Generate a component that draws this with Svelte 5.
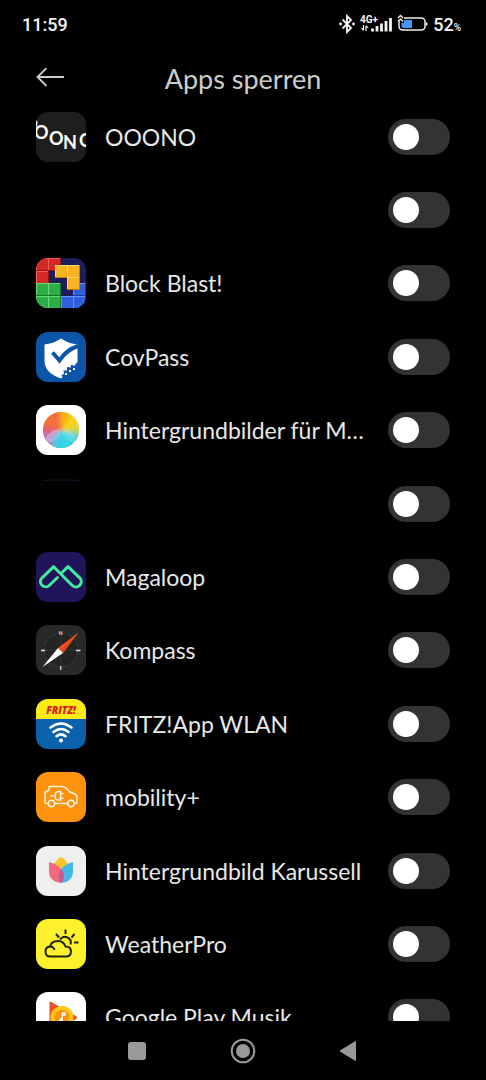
<script>
	let apps = $state([
		{ id: 'ooono', name: 'OOONO', locked: false },
		{ id: 'empty', name: '', locked: false },
		{ id: 'blocks', name: 'Block Blast!', locked: false },
		{ id: 'covpass', name: 'CovPass', locked: false },
		{ id: 'wheel', name: 'Hintergrundbilder für M…', locked: false },
		{ id: 'dark', name: '', locked: false },
		{ id: 'magaloop', name: 'Magaloop', locked: false },
		{ id: 'compass', name: 'Kompass', locked: false },
		{ id: 'fritz', name: 'FRITZ!App WLAN', locked: false },
		{ id: 'mobility', name: 'mobility+', locked: false },
		{ id: 'tulip', name: 'Hintergrundbild Karussell', locked: false },
		{ id: 'weather', name: 'WeatherPro', locked: false },
		{ id: 'music', name: 'Google Play Musik', locked: false }
	]);

	// base, highlight, shade
	const red = ['#d32a25', '#f0605a', '#98130f'];
	const green = ['#2fae45', '#6bd87a', '#14752a'];
	const blue = ['#2f5fdc', '#6c94f5', '#173a9c'];
	const yellow = ['#f9b320', '#ffd868', '#c67d08'];
	const blocks = [
		[0, 0, red],
		[12, 0, red],
		[0, 13, red],
		[0, 25, green],
		[12, 25, green],
		[0, 38, green],
		[12, 38, green],
		[37, 25, blue],
		[25, 38, blue],
		[37, 38, blue],
		[19, 7, yellow],
		[31, 7, yellow],
		[31, 19, yellow]
	];
</script>

{#snippet appIcon(id)}
	<svg class="icon" viewBox="0 0 50 50" aria-hidden="true">
		{#if id === 'ooono'}
			<rect width="50" height="50" fill="#1d1f1f" />
			<circle cx="-5.500" cy="11" r="6" fill="none" stroke="#fff" stroke-width="2" />
			<g class="ooono">
				<text x="-2" y="27">O</text>
				<text x="13" y="33">O</text>
				<text x="27" y="37">N</text>
				<text x="43" y="35">O</text>
			</g>
		{:else if id === 'blocks'}
			<rect width="50" height="50" fill="#1c1d5c" />
			{#each blocks as [x, y, [base, light, shade]]}
				<rect {x} {y} width="13" height="13" fill={shade} />
				<rect {x} {y} width="12" height="12" fill={light} />
				<rect x={x + 1} y={y + 1} width="11" height="11" fill={base} />
			{/each}
		{:else if id === 'covpass'}
			<rect width="50" height="50" fill="#0d55a9" />
			<path
				d="M25 6.500C20 10 14 12 8.500 12.500V29C8.500 38 16 43.500 25 46.500L26.500 45.500L25.500 43L28 42L27.500 38.500L31 38.500L31 35L34.500 35.500L35.500 32.500L38 34L41.500 30V12.500C36 12 30 10 25 6.500Z"
				fill="#fff"
			/>
			<path d="M16.500 20.500L23.500 28.500Q30 18 42 14" fill="none" stroke="#0d55a9" stroke-width="4" />
			<g fill="#fff">
				<rect x="29" y="41" width="2" height="2" />
				<rect x="33" y="38" width="2" height="2" />
				<rect x="37" y="36" width="2" height="2" />
			</g>
		{:else if id === 'wheel'}
			<defs>
				<clipPath id="disc"><circle cx="25" cy="25" r="18" /></clipPath>
				<filter id="soften"><feGaussianBlur stdDeviation="2" /></filter>
			</defs>
			<rect width="50" height="50" fill="#fff" />
			<g clip-path="url(#disc)">
				<rect width="50" height="50" fill="#fbb03a" />
				<g filter="url(#soften)">
					<path d="M25 26L20 0L45 0Z" fill="#f9b010" />
					<path d="M25 26L40 0L54 12L54 24Z" fill="#fad313" />
					<path d="M25 26L54 18L54 36Z" fill="#c6d85a" />
					<path d="M25 26L54 31L40 52L25 52Z" fill="#33d0dc" />
					<path d="M25 26L28 52L8 50L8 40Z" fill="#38c4e4" />
					<path d="M25 26L14 46L-4 36L-2 24Z" fill="#b078c4" />
					<path d="M25 26L-4 30L-4 12Z" fill="#e8606e" />
					<path d="M25 26L-4 18L10 0L24 0Z" fill="#f4703c" />
				</g>
				<ellipse cx="17" cy="31" rx="9" ry="4.500" transform="rotate(-38 17 31)" fill="#fff" opacity=".3" />
				<ellipse cx="33" cy="31" rx="9" ry="4.500" transform="rotate(38 33 31)" fill="#fff" opacity=".2" />
				<ellipse cx="25" cy="36" rx="9" ry="10" fill="#38e0ee" opacity=".4" />
			</g>
		{:else if id === 'dark'}
			<path d="M5 .5H44V2Q24 1 5 2Z" fill="#0f1428" />
		{:else if id === 'magaloop'}
			<rect width="50" height="50" fill="#21145a" />
			<path
				d="M21.500 25.500L13.500 33.300A5.300 5.300 0 0 1 6 25.800L17.700 14.700L36 33.300A5.300 5.300 0 0 0 43.700 25.800L32 14.700L25 21.500"
				fill="none"
				stroke="#42eb9c"
				stroke-width="3"
				stroke-linecap="round"
				stroke-linejoin="round"
			/>
		{:else if id === 'compass'}
			<rect width="50" height="50" fill="#292929" />
			<circle cx="25" cy="25" r="17" fill="#242424" stroke="#3c3c3c" stroke-dasharray="8 1.500" />
			<path d="M25 9V41M9 25H41" stroke="#3b3b3b" stroke-width=".7" />
			<path d="M5 25.500H9M40 25.500H44.500M24.700 41V45" stroke="#ddd" stroke-width="1.300" />
			<text class="north" x="24.700" y="9.500">N</text>
			<path d="M42.500 7.500L22 23L27 28Z" fill="#f4511e" />
			<path d="M42.500 7.500L24.500 25.500L27 28Z" fill="#e2451a" />
			<path d="M6.500 42L22 23L27 28Z" fill="#fff" />
		{:else if id === 'fritz'}
			<rect width="50" height="50" fill="#0b61ab" />
			<rect width="50" height="20" fill="#fdea14" />
			<text class="fritz" x="25" y="15">FRITZ!</text>
			<g fill="none" stroke="#fff" stroke-width="2.600" stroke-linecap="round">
				<path d="M14.500 28.500Q25 20.500 35.500 28.500" />
				<path d="M17.500 33Q25 27 32.500 33" />
				<path d="M20.500 37.200Q25 33.500 29.500 37.200" />
			</g>
			<circle cx="25" cy="41.500" r="2" fill="#fff" />
		{:else if id === 'mobility'}
			<rect width="50" height="50" fill="#fd920f" />
			<g fill="none" stroke="#fff3dc" stroke-width="1.500" stroke-linejoin="round" stroke-linecap="round">
				<path d="M12 31.500H10Q9 31 9 29V20.500L13 18V14.500H26Q28 14.500 30 16L34 20L39 22Q41 23 41 25V29.500Q41 31.500 39 31.500" />
				<path d="M19.500 31.500H31.500" />
				<circle cx="15.500" cy="31.500" r="3.200" />
				<circle cx="35" cy="31.500" r="3.200" />
				<path d="M15 24H19M24.500 19.500H22.500Q19 20 19 24Q19 28 22.500 28H24.500ZM24.500 21.500H27M24.500 26.200H27" />
			</g>
		{:else if id === 'tulip'}
			<rect width="50" height="50" fill="#efefef" />
			<path d="M17 19Q21 13 25 11Q29 13 33 19L25 30Z" fill="#f8c62c" />
			<path d="M13 16Q26 19 28 30Q28 35 25.500 37Q13 36 13 25Z" fill="#f4697d" />
			<path d="M37 16Q24 19 22.500 30Q22.500 35 25 37Q37 36 37 25Z" fill="#45b9e6" />
			<path d="M25.200 22.500Q28 27 28 31Q27.500 35 25.200 37Q22.500 35 22.500 31Q22.800 27 25.200 22.500Z" fill="#d2568e" />
		{:else if id === 'weather'}
			<rect width="50" height="50" fill="#fdf02c" />
			<g fill="none" stroke="#1f2508" stroke-width="2" stroke-linejoin="round">
				<path
					d="M14 37.500Q9.500 37.500 9.500 32.500Q9.500 28 14 27.500Q15.500 22 22 22Q27.500 22 29.500 27.500Q35 27.500 35 32.500Q35 37.500 30 37.500Z"
				/>
				<path d="M14 27.500Q17.500 27.500 18.500 31" />
				<path d="M24 20.500Q27.500 16.500 31.500 18.500Q36 20.500 34.500 25.500" />
				<path d="M29.500 10.500V15M20 15L23 18.500M38.500 15L35.500 18.500M38 23.500H42.500" />
			</g>
		{:else if id === 'music'}
			<rect width="50" height="50" fill="#fff" />
			<path d="M13.500 10Q15 9 17 11L40 24Q42 25.500 40 27L17 40Q14 41 13.500 39Z" fill="#ea5130" />
			<circle cx="26" cy="25.500" r="11.500" fill="#ffc814" />
			<circle cx="26" cy="25.500" r="7.500" fill="#fb9310" />
			<circle cx="25" cy="28" r="1.800" fill="#fff" />
			<path d="M26.200 28V21H29V23H26.200" fill="none" stroke="#fff" stroke-width="1.300" />
		{/if}
	</svg>
{/snippet}

<div class="screen">
	<div class="status">
		<time>11:59</time>
		<div class="indicators">
			<svg width="18" height="20" viewBox="0 0 18 20" aria-hidden="true">
				<path d="M4.500 5.500L13 14L9 18V2L13 6L4.500 14.500" fill="none" stroke="#f4f4f4" stroke-width="1.800" />
				<circle cx="2.500" cy="10" r="1.400" fill="#f4f4f4" />
				<circle cx="15.500" cy="10" r="1.400" fill="#f4f4f4" />
			</svg>
			<svg class="signal" width="33" height="20" viewBox="0 0 33 20" aria-hidden="true">
				<text x="0" y="9">4G+</text>
				<path d="M3.500 11V16M3.500 16.500L1.500 14M6 17V12M6 11.500L8 14" fill="none" stroke="#f4f4f4" stroke-width="1.200" />
				<path
					d="M12.500 17.500V14.500M17 17.500V12M21.500 17.500V9.500M26 17.500V7M30.500 17.500V4"
					stroke="#f4f4f4"
					stroke-width="2.800"
				/>
			</svg>
			<svg width="32" height="20" viewBox="0 0 32 20" aria-hidden="true">
				<rect x="2" y="4" width="26" height="12" rx="3.500" fill="none" stroke="#eee" stroke-width="1.500" />
				<path d="M4.500 9H7V6H15V14H6.500Q4.500 14 4.500 12Z" fill="#4596f5" />
				<path d="M29.500 8.500Q31 10 29.500 11.500Z" fill="#eee" stroke="#eee" />
				<path d="M0 0H7V7H0Z" fill="#000" />
				<path d="M1 4L3.500 1.500L6 4M1 7.500L3.500 5L6 7.500" fill="none" stroke="#f5e3cf" stroke-width="1.500" />
			</svg>
			<span class="battery">52<small>%</small></span>
		</div>
	</div>

	<header>
		<button class="back" aria-label="Zurück">
			<svg width="28" height="20" viewBox="0 0 28 20" aria-hidden="true">
				<path d="M10.500 0L1.500 9L10.500 18M1.500 9H28" fill="none" stroke="#ccc" stroke-width="1.800" />
			</svg>
		</button>
		<h1>Apps sperren</h1>
	</header>

	<main>
		<ul>
			{#each apps as app (app.id)}
				<li>
					{@render appIcon(app.id)}
					<label for={app.id}>{app.name}</label>
					<input
						type="checkbox"
						role="switch"
						id={app.id}
						aria-label={app.name ? null : 'App sperren'}
						bind:checked={app.locked}
					/>
				</li>
			{/each}
		</ul>
	</main>

	<nav>
		<button aria-label="Letzte Apps">
			<svg width="26" height="26" viewBox="0 0 26 26"><rect x="4" y="4" width="18" height="18" rx="3" /></svg>
		</button>
		<button aria-label="Startseite">
			<svg width="26" height="26" viewBox="0 0 26 26">
				<circle cx="13" cy="13" r="11.300" class="ring" />
				<circle cx="13" cy="13" r="7" />
			</svg>
		</button>
		<button aria-label="Zurück">
			<svg width="26" height="26" viewBox="0 0 26 26">
				<path d="M4 13L19.500 3.500V22.500Z" class="triangle" />
			</svg>
		</button>
	</nav>
</div>

<style>
	:global(body) {
		margin: 0;
		background: #000;
	}

	.screen {
		display: flex;
		flex-direction: column;
		height: 100vh;
		background: #000;
		color: #e8e8e8;
		font-family: Lato, 'Noto Sans', sans-serif;
	}

	.status {
		display: flex;
		flex: none;
		align-items: center;
		justify-content: space-between;
		height: 48px;
		padding: 0 25px 0 22px;
		color: #f4f4f4;
		font-family: Roboto, sans-serif;
		font-size: 18px;
		font-weight: 500;
	}

	.indicators {
		display: flex;
		align-items: center;
		gap: 4px;
	}

	.signal text {
		fill: #f4f4f4;
		font-size: 10px;
		font-weight: 700;
	}

	.battery small {
		font-size: 10px;
	}

	header {
		display: grid;
		flex: none;
		grid-template-columns: 28px 1fr 28px;
		align-items: center;
		height: 44px;
		padding: 8px 36px 0;
	}

	h1 {
		margin: 0;
		color: #ccc;
		font-size: 27px;
		font-weight: 400;
		text-align: center;
	}

	button {
		display: flex;
		align-items: center;
		justify-content: center;
		padding: 0;
		border: 0;
		background: none;
		cursor: pointer;
	}

	main {
		flex: 1;
		min-height: 0;
		overflow: hidden;
	}

	ul {
		display: grid;
		grid-auto-rows: 1fr;
		min-height: 954px;
		margin: 0;
		padding: 0 36px;
		list-style: none;
	}

	li {
		display: flex;
		align-items: center;
		gap: 19px;
	}

	.icon {
		flex: none;
		width: 50px;
		height: 50px;
		border-radius: 12px;
	}

	.ooono text {
		fill: #fff;
		font-size: 18px;
		font-weight: 700;
	}

	.north {
		fill: #ddd;
		font-size: 5px;
		font-weight: 700;
		text-anchor: middle;
	}

	.fritz {
		fill: #d8201c;
		font-family: 'Open Sans', sans-serif;
		font-size: 10px;
		font-style: italic;
		font-weight: 800;
		text-anchor: middle;
	}

	label {
		flex: 1;
		min-width: 0;
		overflow: hidden;
		font-size: 23px;
		line-height: 32px;
		text-overflow: ellipsis;
		white-space: nowrap;
	}

	input {
		flex: none;
		width: 62px;
		height: 36px;
		margin: 0;
		padding: 5px;
		box-sizing: border-box;
		appearance: none;
		border-radius: 18px;
		background: #333;
		cursor: pointer;
	}

	input::before {
		display: block;
		width: 26px;
		height: 26px;
		border-radius: 50%;
		background: #fff;
		content: '';
		transition: transform 0.2s;
	}

	input:checked {
		background: #3482ff;
	}

	input:checked::before {
		transform: translateX(26px);
	}

	nav {
		display: flex;
		flex: none;
		align-items: center;
		justify-content: center;
		height: 59px;
	}

	nav button {
		width: 106px;
		height: 48px;
	}

	nav svg {
		fill: #999;
	}

	.ring {
		fill: none;
		stroke: #999;
		stroke-width: 2;
	}

	.triangle {
		stroke: #999;
		stroke-linejoin: round;
	}
</style>
